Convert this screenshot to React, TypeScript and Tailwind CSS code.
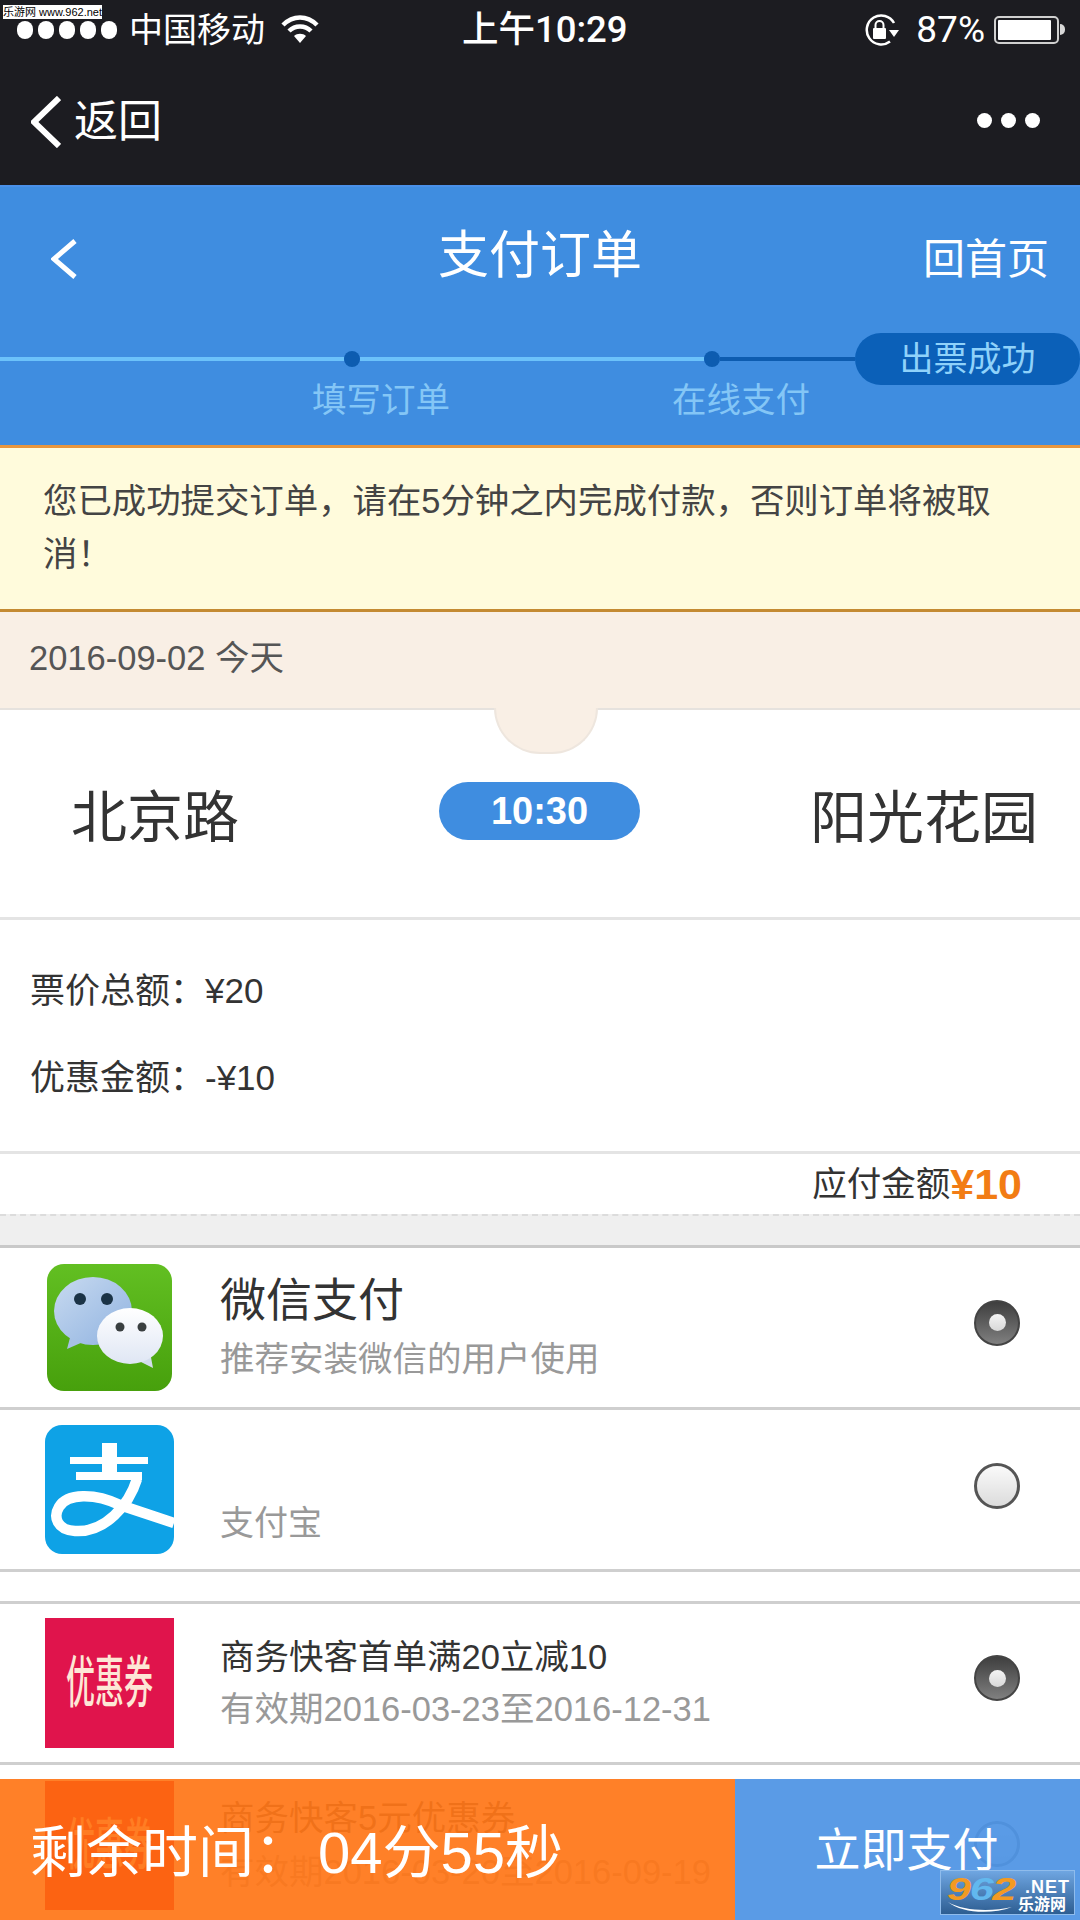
import React from "react";

function Radio({ on, cls = "" }: { on?: boolean; cls?: string }) {
  return on ? (
    <div className={`w-[46px] h-[46px] rounded-full border-2 border-[#444] bg-gradient-to-b from-[#3f3f3f] to-[#808080] flex items-center justify-center ${cls}`}>
      <div className="w-[17px] h-[17px] rounded-full bg-gradient-to-b from-[#f4f4f4] to-[#d8d8d8]" />
    </div>
  ) : (
    <div className={`w-[46px] h-[46px] rounded-full border-[3px] border-[#555] bg-gradient-to-b from-[#fafafa] to-[#dcdcdc] ${cls}`} />
  );
}

function Wechat() {
  return (
    <svg width="125" height="127" viewBox="0 0 125 127">
      <defs>
        <linearGradient id="wg" x1="0" y1="0" x2="0" y2="1">
          <stop offset="0" stopColor="#62bf22" />
          <stop offset="1" stopColor="#47a00c" />
        </linearGradient>
        <linearGradient id="wb" x1="0" y1="0" x2="1" y2="1">
          <stop offset="0" stopColor="#c8daf0" />
          <stop offset="1" stopColor="#8fb2e0" />
        </linearGradient>
        <linearGradient id="ww" x1="0" y1="0" x2="0" y2="1">
          <stop offset="0" stopColor="#ffffff" />
          <stop offset="1" stopColor="#dfe6f4" />
        </linearGradient>
      </defs>
      <rect width="125" height="127" rx="17" fill="url(#wg)" />
      <path d="M20 85 L24 70 L36 78 Z" fill="#a6c1e4" />
      <ellipse cx="46" cy="47" rx="39" ry="34" fill="url(#wb)" />
      <circle cx="33" cy="35" r="6" fill="#1b3346" />
      <circle cx="60" cy="35" r="6" fill="#1b3346" />
      <path d="M106 104 L92 97 L103 88 Z" fill="#d3ddec" />
      <ellipse cx="83" cy="72" rx="33" ry="28" fill="url(#ww)" />
      <circle cx="73" cy="63" r="4.5" fill="#3a3f40" />
      <circle cx="95" cy="63" r="4.5" fill="#3a3f40" />
    </svg>
  );
}

function Alipay() {
  return (
    <svg width="129" height="129" viewBox="0 0 129 129">
      <rect width="129" height="129" rx="17" fill="#0ea2e6" />
      <rect x="57" y="18" width="15" height="36" fill="#fff" />
      <rect x="25" y="32" width="78" height="7" fill="#fff" />
      <rect x="31" y="47" width="66" height="8" fill="#fff" />
      <path
        d="M92 54 C84 80 60 108 30 106 C12 105 8 92 14 82 C22 68 50 68 75 80 L129 98"
        fill="none"
        stroke="#fff"
        strokeWidth="10.5"
      />
    </svg>
  );
}

function Wifi() {
  return (
    <svg width="38" height="30" viewBox="0 0 38 30">
      <path d="M2 10 C12 0 26 0 36 10" fill="none" stroke="#fff" strokeWidth="4.5" />
      <path d="M8 16 C14 10 24 10 30 16" fill="none" stroke="#fff" strokeWidth="4.5" />
      <path d="M13 21 C16 18 22 18 25 21 L19 28 Z" fill="#fff" />
    </svg>
  );
}

function LockRotate() {
  return (
    <svg width="36" height="32" viewBox="0 0 36 32">
      <path d="M30 9 A14.5 14.5 0 1 0 26 27.5" fill="none" stroke="#fff" strokeWidth="2.5" />
      <path d="M25 16 L35 16 L30 23 Z" fill="#fff" />
      <rect x="9" y="14" width="13" height="11" rx="1" fill="#fff" />
      <path d="M11.5 14 V11 A4 4 0 0 1 19.5 11 V14" fill="none" stroke="#fff" strokeWidth="2" />
    </svg>
  );
}

function Chevron({ w, h, sw }: { w: number; h: number; sw: number }) {
  return (
    <svg width={w} height={h} viewBox={`0 0 ${w} ${h}`}>
      <path d={`M${w - 2} 2 L3 ${h / 2} L${w - 2} ${h - 2}`} fill="none" stroke="#fff" strokeWidth={sw} />
    </svg>
  );
}

function Dot() {
  return <div className="w-[15px] h-[15px] rounded-full bg-white" />;
}

function Step({ label }: { label: string }) {
  return (
    <div className="w-[16px] h-[16px] rounded-full bg-[#0d5cb0] relative shrink-0">
      <span className="absolute top-[32px] left-[-39px] whitespace-nowrap text-[34.5px] leading-[40px] text-[#84c6f6] translate-x-[7px] -translate-y-[3px]">
        {label}
      </span>
    </div>
  );
}

function Coupon({ h }: { h: string }) {
  return (
    <div className={`w-[129px] ${h} bg-[#e0144c] flex items-center justify-center text-[#fde7d6] text-[29px] leading-[40px] whitespace-nowrap`}>
      <span className="inline-block scale-y-[1.9] font-medium">优惠券</span>
    </div>
  );
}

export default function App() {
  return (
    <div className="relative w-[1080px] h-[1920px] overflow-hidden bg-white text-[34.5px] text-[#333] [font-family:'Liberation_Sans','Noto_Sans_CJK_SC',sans-serif]">
      {/* dark header */}
      <div className="h-[185px] bg-[#1c1c21] text-white">
        <div className="relative h-[56px] flex items-center pl-[17px] pr-[15px] pt-[3px]">
          <div className="absolute left-[3px] top-[5px] w-[99px] h-[14px] bg-white text-black text-[11px] leading-[14px] whitespace-nowrap overflow-hidden">
            乐游网 www.962.net
          </div>
          <div className="flex gap-[5px] w-[112px] shrink-0">
            {[0, 1, 2, 3, 4].map((i) => (
              <div key={i} className="w-[16px] h-[18px] rounded-full bg-white" />
            ))}
          </div>
          <span className="text-[34px] leading-[40px]">中国移动</span>
          <span className="ml-[16px] flex"><Wifi /></span>
          <span className="ml-[143px] text-[36.5px] leading-[40px] font-medium whitespace-nowrap [font-family:Roboto,'Noto_Sans_CJK_SC',sans-serif]">上午10:29</span>
          <span className="ml-auto flex"><LockRotate /></span>
          <span className="ml-[16px] text-[37px] leading-[40px] [font-family:Roboto,sans-serif]">87%</span>
          <div className="ml-[9px] flex items-center">
            <div className="w-[65px] h-[28px] border-2 border-[#d0d0d0] rounded-[5px] p-[2px] pr-[6px]">
              <div className="w-full h-full bg-white rounded-[1px]" />
            </div>
            <div className="w-[5px] h-[11px] bg-[#d8d8d8] rounded-r-full ml-[1px]" />
          </div>
        </div>
        <div className="h-[129px] flex items-center justify-between pl-[31px] pr-[40px]">
          <div className="flex items-center gap-[13px] mt-[2px]">
            <Chevron w={30} h={52} sw={6} />
            <span className="text-[44px] leading-[52px]">返回</span>
          </div>
          <div className="flex gap-[9px]">
            <Dot />
            <Dot />
            <Dot />
          </div>
        </div>
      </div>

      {/* blue title + steps */}
      <div className="h-[260px] bg-[#3f8de0] border-t-2 border-[#4a90e8] text-white flex flex-col">
        <div className="relative h-[140px] flex items-center justify-center">
          <span className="absolute left-[51px] top-[52px] flex"><Chevron w={26} h={40} sw={5} /></span>
          <span className="text-[51px] leading-[60px] mt-[-2px]">支付订单</span>
          <span className="absolute right-[31px] top-[48px] text-[42px] leading-[50px]">回首页</span>
        </div>
        <div className="relative h-[52px] flex items-center mt-[6px]">
          <div className="w-[344px] h-[4px] bg-[#6cc2fa]" />
          <Step label="填写订单" />
          <div className="w-[344px] h-[4px] bg-[#6cc2fa]" />
          <Step label="在线支付" />
          <div className="flex-1 h-[4px] bg-[#0d5cb0]" />
          <div className="w-[225px] h-[52px] rounded-full bg-[#0b60b8] text-[#8fd2fa] flex items-center justify-center text-[34px] leading-[40px]">
            出票成功
          </div>
        </div>
      </div>

      {/* notice */}
      <div className="h-[167px] bg-[#fffbdc] border-t-[3px] border-b-[3px] border-t-[#e8963e] border-b-[#c48a32] pl-[43px] pr-[70px] pt-[27px] text-[34.4px] leading-[53px] text-[#444]">
        您已成功提交订单，请在5分钟之内完成付款，否则订单将被取消！
      </div>

      {/* date */}
      <div className="h-[96px] bg-[#f9efe5] pl-[29px] pb-[4px] flex items-center text-[#555] leading-[40px]">
        2016-09-02 今天
      </div>

      {/* route */}
      <div className="relative h-[212px] border-t-2 border-b-[3px] border-t-[#e6e2de] border-b-[#e4e4e4] flex items-center justify-between pl-[71px] pr-[42px]">
        <div className="absolute left-[494px] top-[-2px] w-[104px] h-[46px] rounded-b-[52px] bg-[#f9efe5] border-b-2 border-x-2 border-[#eee6de]" />
        <span className="text-[56px] leading-[64px] text-[#333] mt-[8px]">北京路</span>
        <div className="absolute left-[439px] top-[72px] w-[201px] h-[58px] rounded-full bg-[#3f8de0] text-white font-bold text-[38px] flex items-center justify-center">
          10:30
        </div>
        <span className="text-[57px] leading-[64px] text-[#333] mt-[8px]">阳光花园</span>
      </div>

      {/* prices */}
      <div className="h-[234px] border-b-[3px] border-[#e4e4e4] pl-[30px] pt-[51px] flex flex-col gap-[47px] text-[#333] text-[35px]">
        <div className="leading-[40px]">票价总额：¥20</div>
        <div className="leading-[40px]">优惠金额：-¥10</div>
      </div>
      <div className="h-[60px] flex items-center justify-end pr-[58px] text-[#333]">
        <span className="leading-[44px] text-[34.5px]">应付金额</span>
        <span className="text-[43px] leading-[50px] font-bold text-[#f27c14]">¥10</span>
      </div>

      {/* divider */}
      <div className="h-[34px] border-b-[3px] border-[#c9c9c9]">
        <div className="h-full bg-[#efefef] border-t-2 border-dashed border-[#dcdcdc]" />
      </div>

      {/* wechat */}
      <div className="h-[162px] flex items-center pl-[47px] pr-[60px] border-b-[3px] border-[#cfcfcf]">
        <div className="w-[173px] shrink-0 flex"><Wechat /></div>
        <div className="flex-1 flex flex-col pt-[4px]">
          <span className="text-[46px] leading-[59px] text-[#333]">微信支付</span>
          <span className="text-[34.5px] leading-[59px] text-[#999]">推荐安装微信的用户使用</span>
        </div>
        <Radio on cls="mb-[10px]" />
      </div>

      {/* alipay */}
      <div className="h-[162px] flex items-center pl-[45px] pr-[60px] border-b-[3px] border-[#cfcfcf]">
        <div className="w-[175px] shrink-0 flex"><Alipay /></div>
        <div className="flex-1 flex flex-col pt-[66px]">
          <span className="text-[34px] leading-[40px] text-[#999]">支付宝</span>
        </div>
        <Radio cls="mb-[8px]" />
      </div>

      <div className="h-[29px]" />

      {/* coupon 1 */}
      <div className="h-[164px] flex items-center pl-[45px] pr-[60px] border-t-[3px] border-b-[3px] border-[#cfcfcf]">
        <div className="w-[175px] shrink-0 flex"><Coupon h="h-[130px]" /></div>
        <div className="flex-1 flex flex-col">
          <span className="leading-[52px] text-[#333]">商务快客首单满20立减10</span>
          <span className="leading-[52px] text-[#999]">有效期2016-03-23至2016-12-31</span>
        </div>
        <Radio on cls="mb-[10px]" />
      </div>

      {/* coupon 2, partly covered by the bar */}
      <div className="h-[158px] flex items-center pl-[45px] pr-[60px]">
        <div className="w-[175px] shrink-0 flex mt-[2px]"><Coupon h="h-[129px]" /></div>
        <div className="flex-1 flex flex-col pt-[2px] opacity-60">
          <span className="leading-[54px] text-[#333]">商务快客5元优惠券</span>
          <span className="leading-[54px] text-[#999]">有效期2016-03-20至2016-09-19</span>
        </div>
        <Radio cls="opacity-50" />
      </div>

      {/* bottom bar */}
      <div className="absolute left-0 right-0 bottom-0 h-[141px] flex text-white">
        <div className="w-[735px] bg-[rgba(255,110,10,0.88)] flex items-center pl-[30px] text-[56px] leading-[64px] whitespace-pre pt-[7px]">
          <span>剩余时间：</span>
          <span className="ml-[8px] text-[58px]">04分55秒</span>
        </div>
        <div className="flex-1 bg-[rgba(67,141,227,0.88)] flex items-center justify-center text-[46px] leading-[52px] pr-[2px]">
          立即支付
        </div>
      </div>

      {/* watermark */}
      <div className="absolute right-[5px] bottom-[5px] w-[135px] h-[45px] bg-gradient-to-b from-[#6fa6e2] to-[#2d5e92] border border-[#8fbcec]">
        <div className="absolute left-[6px] top-0 flex origin-left scale-x-[1.35] text-[32px] leading-[37px] font-bold italic tracking-[-1px]">
          <span className="text-[#f39a22]">9</span>
          <span className="text-[#62b8ee]">6</span>
          <span className="text-[#f39a22]">2</span>
        </div>
        <span className="absolute left-[84px] top-[6px] text-white text-[18px] leading-[21px] font-bold tracking-[1px]">.NET</span>
        <span className="absolute left-[77px] top-[24px] text-white text-[16px] leading-[19px] font-bold whitespace-nowrap">乐游网</span>
        <svg className="absolute left-[6px] top-[30px]" width="66" height="12" viewBox="0 0 66 12">
          <path d="M1 1 C16 10 44 11 65 6 C44 14 14 12 1 1 Z" fill="#fff" />
        </svg>
      </div>
    </div>
  );
}
